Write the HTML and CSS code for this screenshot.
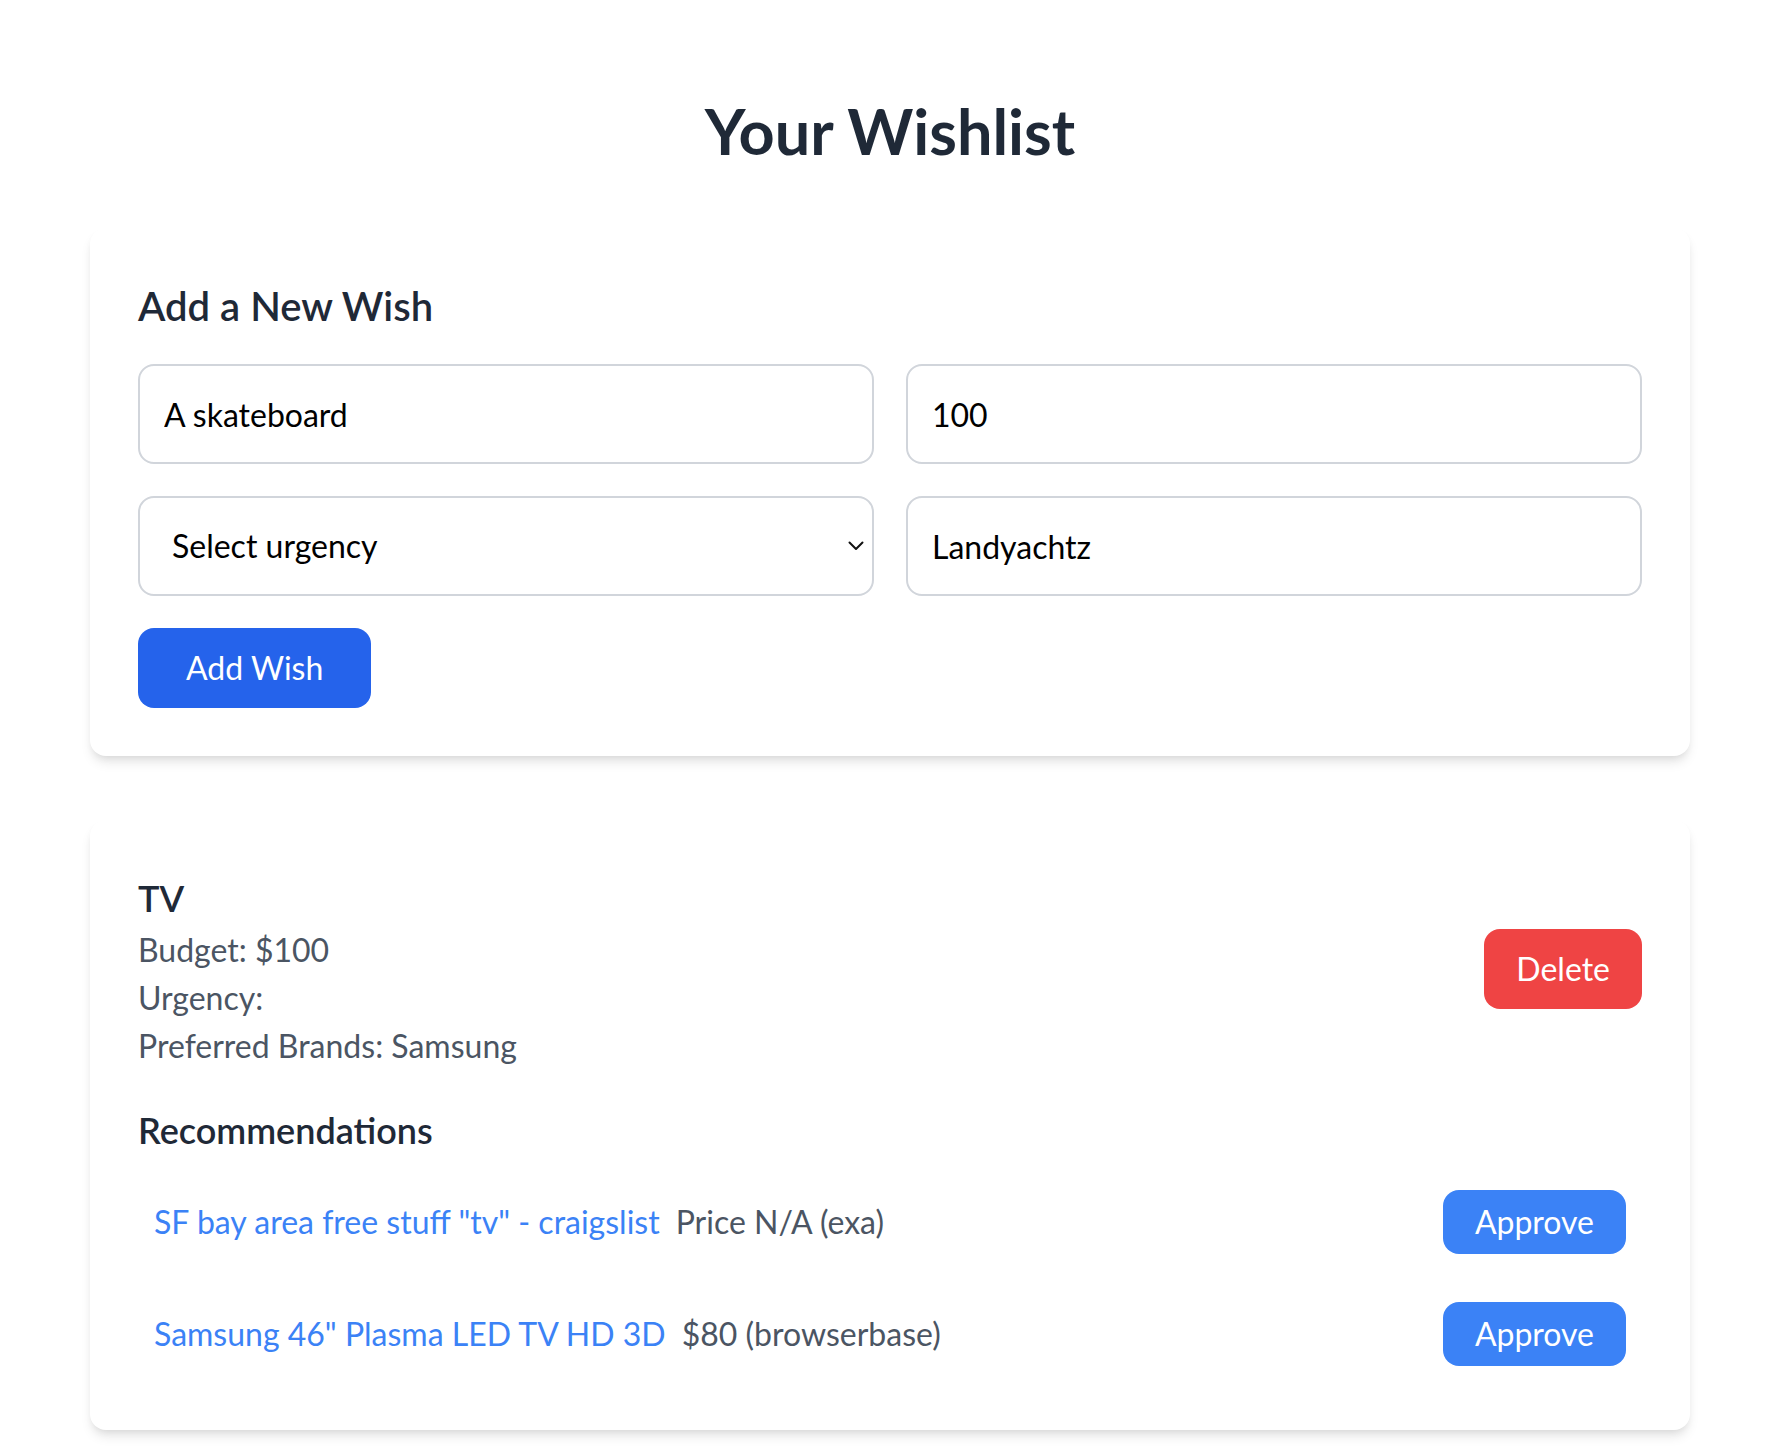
FILE: index.html
```html
<!DOCTYPE html>
<html lang="en">
<head>
<meta charset="utf-8">
<title>Your Wishlist</title>
<link rel="stylesheet" href="styles.css">
</head>
<body>
<main class="page">
  <h1 class="title">Your Wishlist</h1>

  <section class="card form-card">
    <h2 class="card-title">Add a New Wish</h2>
    <div class="form-grid">
      <input class="field" type="text" value="A skateboard">
      <input class="field" type="text" value="100">
      <div class="select-wrap">
        <select class="field select">
          <option>Select urgency</option>
        </select>
        <svg class="chevron" viewBox="0 0 16 10" width="16" height="10" aria-hidden="true"><path d="M1.5 1.5 L8 8 L14.5 1.5" fill="none" stroke="#111" stroke-width="2" stroke-linecap="round" stroke-linejoin="round"/></svg>
      </div>
      <input class="field" type="text" value="Landyachtz">
    </div>
    <button class="btn btn-primary">Add Wish</button>
  </section>

  <section class="card wish-card">
    <div class="wish-head">
      <div class="wish-info">
        <h3 class="wish-name">TV</h3>
        <p class="wish-meta">Budget: $100</p>
        <p class="wish-meta">Urgency: </p>
        <p class="wish-meta">Preferred Brands: Samsung</p>
      </div>
      <button class="btn btn-danger">Delete</button>
    </div>
    <h4 class="rec-title">Recommendations</h4>
    <ul class="rec-list">
      <li class="rec-row">
        <div class="rec-text"><a class="rec-link" href="#">SF bay area free stuff "tv" - craigslist</a><span class="rec-price">Price N/A (exa)</span></div>
        <button class="btn btn-approve">Approve</button>
      </li>
      <li class="rec-row">
        <div class="rec-text"><a class="rec-link" href="#">Samsung 46" Plasma LED TV HD 3D</a><span class="rec-price">$80 (browserbase)</span></div>
        <button class="btn btn-approve">Approve</button>
      </li>
    </ul>
  </section>
</main>
</body>
</html>
```

FILE: styles.css
```css
* {
  box-sizing: border-box;
}

html, body {
  margin: 0;
  padding: 0;
  background: #ffffff;
}

body {
  font-family: "Lato", "Open Sans", "Liberation Sans", sans-serif;
  color: #1f2937;
}

.page {
  padding: 91px 86px 16px 90px;
}

.title {
  margin: 0 0 57px;
  text-align: center;
  font-size: 63px;
  line-height: 80px;
  font-weight: 700;
  color: #1f2937;
}

.card {
  background: #ffffff;
  border-radius: 16px;
  padding: 48px;
  margin-bottom: 64px;
  box-shadow: 0 8px 12px -2px rgba(0, 0, 0, 0.1), 0 4px 8px -4px rgba(0, 0, 0, 0.1);
}

.card-title {
  margin: 0 0 32px;
  padding-top: 2px;
  height: 56px;
  font-size: 40px;
  line-height: 56px;
  font-weight: 600;
  color: #1f2937;
}

.form-grid {
  display: grid;
  grid-template-columns: 1fr 1fr;
  gap: 32px;
}

.field {
  display: block;
  width: 100%;
  height: 100px;
  padding: 24px;
  border: 2px solid #d1d5db;
  border-radius: 16px;
  font-family: inherit;
  font-size: 32px;
  line-height: 48px;
  color: #000000;
  background: #ffffff;
  outline: none;
}

.select-wrap {
  position: relative;
}

.select {
  appearance: none;
  -webkit-appearance: none;
  padding-left: 32px;
}

.chevron {
  position: absolute;
  right: 10px;
  top: 45px;
  pointer-events: none;
}

.btn {
  border: none;
  font-family: inherit;
  font-size: 32px;
  line-height: 48px;
  color: #ffffff;
  border-radius: 16px;
  padding: 16px 32px;
  cursor: pointer;
}

.btn-primary {
  margin-top: 32px;
  padding: 16px 48px;
  background: #2563eb;
}

.btn-danger {
  background: #ef4444;
}

.btn-approve {
  background: #3b82f6;
  padding: 8px 32px;
}

.wish-head {
  display: flex;
  align-items: center;
  justify-content: space-between;
}

.wish-info {
  padding-top: 2px;
}

.wish-name {
  margin: 0;
  font-size: 36px;
  line-height: 56px;
  font-weight: 600;
  color: #1f2937;
}

.wish-meta {
  margin: 0;
  font-size: 32px;
  line-height: 48px;
  color: #4b5563;
}

.rec-title {
  margin: 32px 0 16px;
  font-size: 36px;
  line-height: 56px;
  font-weight: 600;
  color: #1f2937;
}

.rec-list {
  list-style: none;
  margin: 0;
  padding: 0;
  display: flex;
  flex-direction: column;
  gap: 16px;
}

.rec-row {
  display: flex;
  align-items: center;
  justify-content: space-between;
  padding: 16px;
}

.rec-text {
  font-size: 32px;
  line-height: 48px;
}

.rec-link {
  color: #3b82f6;
  text-decoration: none;
}

.rec-price {
  margin-left: 16px;
  color: #4b5563;
}

.wish-card {
  margin-bottom: 0;
}
```
